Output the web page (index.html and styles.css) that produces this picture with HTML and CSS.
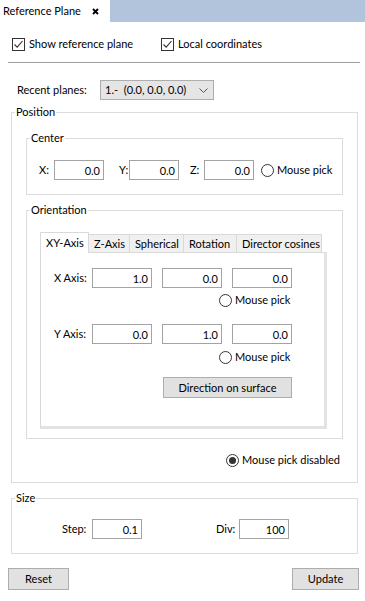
FILE: index.html
```html
<!DOCTYPE html>
<html lang="en">
<head>
    <meta charset="UTF-8">
    <meta name="viewport" content="width=device-width, initial-scale=1.0">
    <title>Reference Plane</title>
    <link rel="stylesheet" href="styles.css">
</head>
<body>
    <div class="tabbar">
        <div class="doc-tab">
            <span>Reference Plane</span>
            <svg class="close" width="7" height="7" viewBox="0 0 7 7"><path d="M1 1 L6 6 M6 1 L1 6" stroke="#000" stroke-width="1.8"/></svg>
        </div>
    </div>

    <div class="checks">
        <label class="check"><span class="box"><svg width="11" height="11" viewBox="0 0 11 11"><path d="M1.5 5.5 L4.2 8.2 L9.5 2" fill="none" stroke="#333" stroke-width="1.1"/></svg></span>Show reference plane</label>
        <label class="check second"><span class="box"><svg width="11" height="11" viewBox="0 0 11 11"><path d="M1.5 5.5 L4.2 8.2 L9.5 2" fill="none" stroke="#333" stroke-width="1.1"/></svg></span>Local coordinates</label>
    </div>

    <div class="separator"></div>

    <div class="recent">
        <span class="recent-label">Recent planes:</span>
        <div class="combo">
            <span>1.-&nbsp; (0.0, 0.0, 0.0)</span>
            <svg width="9" height="5" viewBox="0 0 9 5"><path d="M0.5 0.5 L4.5 4.5 L8.5 0.5" fill="none" stroke="#555" stroke-width="1"/></svg>
        </div>
    </div>

    <fieldset class="group position">
        <legend>Position</legend>

        <fieldset class="group center">
            <legend>Center</legend>
            <div class="center-row">
                <span class="lab lab-x">X:</span>
                <input class="field w50" type="text" value="0.0">
                <span class="lab lab-y">Y:</span>
                <input class="field w50" type="text" value="0.0">
                <span class="lab lab-z">Z:</span>
                <input class="field w50" type="text" value="0.0">
                <label class="radio pick-center"><span class="dot"></span>Mouse pick</label>
            </div>
        </fieldset>

        <fieldset class="group orientation">
            <legend>Orientation</legend>
            <div class="tabs">
                <div class="tab-row">
                    <span class="tab active t-xy">XY-Axis</span>
                    <span class="tab t-z">Z-Axis</span>
                    <span class="tab t-sph">Spherical</span>
                    <span class="tab t-rot">Rotation</span>
                    <span class="tab t-dir">Director cosines</span>
                </div>
                <div class="tab-panel">
                    <div class="axis-row">
                        <span class="axis-label">X Axis:</span>
                        <input class="field w60" type="text" value="1.0">
                        <input class="field w60" type="text" value="0.0">
                        <input class="field w60" type="text" value="0.0">
                    </div>
                    <label class="radio axis-pick"><span class="dot"></span>Mouse pick</label>
                    <div class="axis-row second">
                        <span class="axis-label">Y Axis:</span>
                        <input class="field w60" type="text" value="0.0">
                        <input class="field w60" type="text" value="1.0">
                        <input class="field w60" type="text" value="0.0">
                    </div>
                    <label class="radio axis-pick pick2"><span class="dot"></span>Mouse pick</label>
                    <button class="btn surface">Direction on surface</button>
                </div>
            </div>
        </fieldset>

        <div class="disabled-row">
            <label class="radio"><span class="dot on"></span>Mouse pick disabled</label>
        </div>
    </fieldset>

    <fieldset class="group size">
        <legend>Size</legend>
        <div class="size-row">
            <span class="lab lab-step">Step:</span>
            <input class="field w50" type="text" value="0.1">
            <span class="lab lab-div">Div:</span>
            <input class="field w50" type="text" value="100">
        </div>
    </fieldset>

    <div class="actions">
        <button class="btn reset">Reset</button>
        <button class="btn update">Update</button>
    </div>
</body>
</html>
```

FILE: styles.css
```css
body {
    margin: 0;
    background: #fff;
    color: #000;
    font-family: Lato, "Noto Sans", sans-serif;
    font-size: 11px;
    line-height: 14px;
    white-space: nowrap;
}

/* document tab strip */
.tabbar {
    height: 22px;
    background: #b1c4dc;
    display: flex;
}
.doc-tab {
    width: 110px;
    background: #fff;
    display: flex;
    align-items: center;
    padding-left: 3px;
    box-sizing: border-box;
}
.close {
    margin-left: 11px;
}

/* check boxes */
.checks {
    display: flex;
    margin-top: 15px;
    padding-left: 12px;
    height: 14px;
}
.check {
    display: flex;
    align-items: center;
}
.check.second {
    margin-left: 28px;
}
.box {
    width: 11px;
    height: 11px;
    border: 1px solid #333;
    margin-right: 4px;
    display: flex;
    flex-shrink: 0;
}

.separator {
    margin: 11px 5px 0 8px;
    height: 1px;
    background: #a0a0a0;
}

/* recent planes */
.recent {
    display: flex;
    align-items: center;
    margin-top: 17px;
    padding-left: 17px;
}
.recent-label {
    width: 83px;
    flex-shrink: 0;
}
.combo {
    width: 114px;
    height: 20px;
    box-sizing: border-box;
    background: #e5e5e5;
    border: 1px solid #adadad;
    display: flex;
    align-items: center;
    justify-content: space-between;
    padding: 0 5px 0 4px;
}

/* group boxes */
.group {
    border: 1px solid #dcdcdc;
    margin: 0;
    padding: 0;
    min-width: 0;
}
.group legend {
    padding: 0 1px;
    margin-left: 3px;
    line-height: 14px;
}
.position {
    margin: 5px 7px 0 11px;
}
.center {
    margin: 12px 14px 0 14px;
}
.center-row {
    display: flex;
    align-items: center;
    margin: 15px 0 14px 12px;
}
.lab {
    flex-shrink: 0;
}
.lab-x { width: 15px; }
.lab-y { width: 10px; margin-left: 15px; }
.lab-z { width: 14px; margin-left: 11px; }
.pick-center { margin-left: 7px; }

.field {
    height: 20px;
    box-sizing: border-box;
    border: 1px solid #a3a3a3;
    font: inherit;
    text-align: right;
    padding: 0 3px 0 0;
    margin: 0;
    color: #000;
    background: #fff;
    flex-shrink: 0;
}
.w50 { width: 50px; }
.w60 { width: 60px; }

/* radio buttons */
.radio {
    display: flex;
    align-items: center;
    height: 14px;
}
.dot {
    width: 13px;
    height: 13px;
    box-sizing: border-box;
    border: 1px solid #333;
    border-radius: 50%;
    margin-right: 3px;
    display: flex;
    align-items: center;
    justify-content: center;
    flex-shrink: 0;
}
.dot.on::after {
    content: "";
    width: 7px;
    height: 7px;
    border-radius: 50%;
    background: #333;
}

/* orientation tabs */
.orientation {
    margin: 8px 14px 0 14px;
}
.tabs {
    margin: 15px 15px 9px 13px;
}
.tab-row {
    display: flex;
    align-items: flex-end;
    height: 20px;
}
.tab {
    height: 18px;
    box-sizing: border-box;
    padding: 0 0 0 5px;
    background: #f0f0f0;
    border: 1px solid #d9d9d9;
    border-bottom: none;
    margin-left: -1px;
    line-height: 17px;
    flex-shrink: 0;
}
.tab.active {
    height: 21px;
    margin-left: 0;
    margin-bottom: -1px;
    background: #fff;
    position: relative;
    padding-top: 1px;
}
.t-xy { width: 49px; }
.t-z { width: 42px; }
.t-sph { width: 55px; }
.t-rot { width: 54px; }
.t-dir { width: 86px; }

.tab-panel {
    height: 177px;
    box-sizing: border-box;
    border: 1px solid #d9d9d9;
    border-right: 3px solid #e3e3e3;
    border-bottom: 3px solid #e3e3e3;
    padding: 15px 0 0 13px;
}
.axis-row {
    display: flex;
    align-items: center;
    gap: 10px;
}
.axis-row.second {
    margin-top: 17px;
}
.axis-label {
    width: 28px;
    flex-shrink: 0;
}
.axis-pick {
    margin: 5px 0 0 165px;
}
.axis-pick.pick2 {
    margin-top: 6px;
}

.btn {
    font: inherit;
    color: #000;
    background: #e1e1e1;
    border: 1px solid #adadad;
    padding: 0;
    margin: 0;
}
.surface {
    display: block;
    width: 129px;
    height: 21px;
    margin: 13px 0 0 109px;
}

.disabled-row {
    display: flex;
    justify-content: flex-end;
    margin: 14px 17px 15px 0;
}

/* size */
.size {
    margin: 8px 7px 0 11px;
}
.size-row {
    display: flex;
    align-items: center;
    margin: 14px 0 14px 50px;
}
.lab-step { width: 30px; }
.lab-div { width: 23px; margin-left: 74px; }

.actions {
    display: flex;
    justify-content: space-between;
    margin: 14px 6px 0 8px;
}
.reset {
    width: 61px;
    height: 22px;
}
.update {
    width: 67px;
    height: 22px;
}
```
